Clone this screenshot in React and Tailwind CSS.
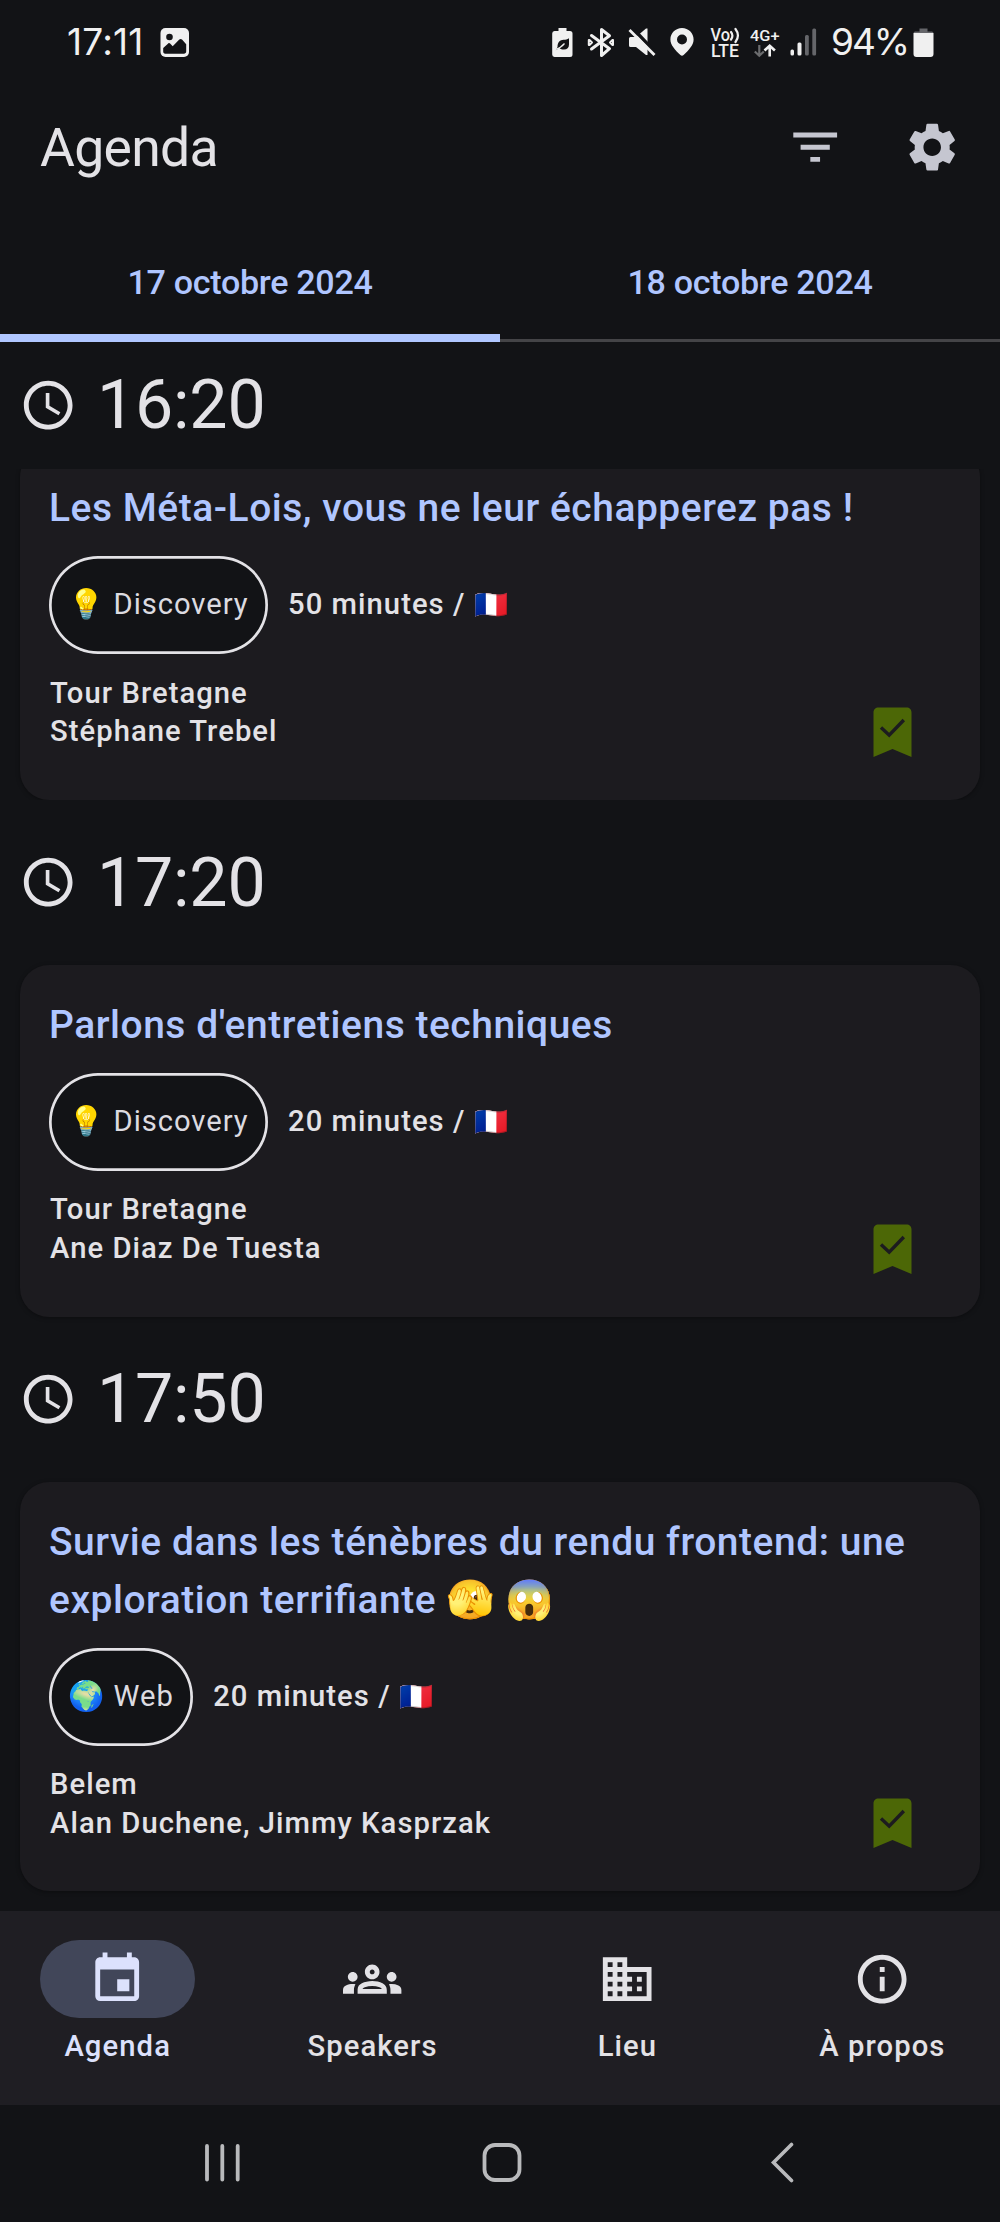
import React from 'react';
import {
  MdFilterList,
  MdSettings,
  MdSchedule,
  MdEvent,
  MdOutlineGroups,
  MdBusiness,
  MdOutlineInfo,
} from 'react-icons/md';

const slots = [
  {
    time: '16:20',
    title: 'Les Méta-Lois, vous ne leur échapperez pas !',
    emoji: '💡',
    category: 'Discovery',
    duration: '50 minutes /',
    language: '🇫🇷',
    room: 'Tour Bretagne',
    speakers: 'Stéphane Trebel',
  },
  {
    time: '17:20',
    title: "Parlons d'entretiens techniques",
    emoji: '💡',
    category: 'Discovery',
    duration: '20 minutes /',
    language: '🇫🇷',
    room: 'Tour Bretagne',
    speakers: 'Ane Diaz De Tuesta',
  },
  {
    time: '17:50',
    title: 'Survie dans les ténèbres du rendu frontend: une exploration terrifiante 🫣 😱',
    emoji: '🌍',
    category: 'Web',
    duration: '20 minutes /',
    language: '🇫🇷',
    room: 'Belem',
    speakers: 'Alan Duchene, Jimmy Kasprzak',
  },
];

const tabs = [
  { label: '17 octobre 2024', active: true },
  { label: '18 octobre 2024', active: false },
];

const destinations = [
  { label: 'Agenda', Icon: MdEvent, active: true },
  { label: 'Speakers', Icon: MdOutlineGroups, active: false },
  { label: 'Lieu', Icon: MdBusiness, active: false },
  { label: 'À propos', Icon: MdOutlineInfo, active: false },
];

function StatusBar() {
  return (
    <div className="flex h-[70px] shrink-0 items-start pt-[27px] pr-[66px] pl-[67px] text-[#f0f0f0]">
      <span className="font-['Inter',sans-serif] text-[37px] leading-[29px] tracking-[0.2px]">17:11</span>
      <svg className="ml-[16px]" width="30" height="31" viewBox="0 0 30 31" fill="none">
        <rect x="0.5" y="1" width="28.5" height="29" rx="5" fill="currentColor" />
        <circle cx="9.5" cy="10" r="3.3" fill="#121316" />
        <path d="M3.2 21l5-4.6c.7-.6 1.3-.5 1.9.1l2.6 2.8 6.6-6.7c.9-.9 1.9-.9 2.7 0l4.2 4.7v7.2c0 1.4-1 2.2-2.2 2.2H5.2c-1.2 0-2-.9-2-2.2z" fill="#121316" />
      </svg>

      <div className="ml-auto flex items-start">
        <svg width="21" height="31" viewBox="0 0 21 31">
          <path d="M6.5 1h8v3H18a2.5 2.5 0 0 1 2.5 2.5v21A2.5 2.5 0 0 1 18 30H2.5A2.5 2.5 0 0 1 .2 27.5v-21A2.5 2.5 0 0 1 2.5 4h4z" fill="currentColor" />
          <path d="M17 11.2v6.3c0 3.2-2 5-5 5-2 0-3.4-.5-4.6-1.5l-3.6 2.2 1.7-3.2c0-5 2.7-7 6-7.2 2.2-.1 3.6-.4 5.5-1.600z" fill="#121316" />
          <path d="M3.5 22.5C7 21.5 10 19.5 12.5 16.5" stroke="#f0f0f0" strokeWidth="1.2" fill="none" />
        </svg>
        <svg className="ml-[14px]" width="28" height="31" viewBox="0 0 28 31" fill="none" stroke="currentColor" strokeWidth="3" strokeLinejoin="round" strokeLinecap="round">
          <path d="M4.5 8.5l18 13.2L14.500 28.500V2.500l8 6.300-18 13.200" />
          <path d="M1.800 13v5M26 13v5M2.500 13l2.500 2.500L2.500 18M25.500 13L23 15.500l2.500 2.500" strokeWidth="2" />
        </svg>
        <svg className="ml-[13px]" width="28" height="31" viewBox="0 0 28 31" fill="none">
          <path d="M19.500 1.500v26.500h-1.500L8 20H2.500A1.500 1.500 0 0 1 1 18.500v-7A1.500 1.500 0 0 1 2.500 10H8L18 1.500z" fill="currentColor" />
          <path d="M4.500 1L28 26" stroke="#121316" strokeWidth="3.500" />
          <path d="M1.500 3L26.500 28" stroke="currentColor" strokeWidth="2.800" />
        </svg>
        <svg className="ml-[14px]" width="24" height="31" viewBox="0 0 24 31">
          <path fillRule="evenodd" d="M12 1C5.600 1 .4 6 .4 12.400c0 5.800 5 10.600 10 15.700.9 1 2.300 1 3.200 0 5-5.100 10-9.900 10-15.700C23.600 6 18.400 1 12 1zm0 6.500a5 5 0 1 1 0 10 5 5 0 0 1 0-10z" fill="currentColor" />
        </svg>
        <svg className="mt-[-5px] ml-[16px] font-['Roboto',sans-serif] font-medium" width="31" height="42" viewBox="0 -5 31 42" fill="currentColor">
          <text x="0.5" y="13.8" fontSize="17.5" textLength="19.5" lengthAdjust="spacingAndGlyphs">Vo</text>
          <text x="1" y="30" fontSize="17.5" textLength="28" lengthAdjust="spacingAndGlyphs">LTE</text>
          <path d="M21 5c1.800 2.300 1.800 5 0 7.500M25.500 2c3 4 3 9 0 13" fill="none" stroke="currentColor" strokeWidth="2.200" strokeLinecap="round" />
        </svg>
        <svg className="mt-[-5px] ml-[9px] font-['Roboto',sans-serif] font-medium" width="30" height="36" viewBox="0 -5 30 36" fill="none">
          <text x="0" y="14" fontSize="15.5" fill="currentColor" textLength="29.5" lengthAdjust="spacingAndGlyphs">4G+</text>
          <path d="M9.300 18v10.500M4.800 24.500l4.500 4.200 4.500-4.200" stroke="#6b6c6e" strokeWidth="2.200" />
          <path d="M19.700 29.500V19.500M14.500 23.500l5.200-4.800 5.200 4.800" stroke="currentColor" strokeWidth="2.600" />
        </svg>
        <svg className="ml-[10px]" width="27" height="31" viewBox="0 0 27 31" fill="currentColor">
          <rect x="0.5" y="22.5" width="3.5" height="6" rx="1.5" />
          <rect x="7.5" y="15.5" width="4" height="13" rx="1.5" />
          <rect x="15" y="8" width="3.8" height="20.5" rx="1.5" fill="#65666a" />
          <rect x="22.3" y="1.5" width="3.8" height="27" rx="1.5" fill="#65666a" />
        </svg>
        <span className="ml-[14px] w-[82px] font-['Inter',sans-serif] text-[37px] leading-[29px] tracking-[-2px] whitespace-nowrap">94%</span>
        <svg width="21" height="31" viewBox="0 0 21 31">
          <path d="M6.500 1.500h8v3h4c1 0 1.700.5 1.900 1.500H.600C.800 5 1.500 4.500 2.500 4.500h4z" fill="#65666a" />
          <path d="M.500 6h20v21a3 3 0 0 1-3 3h-14a3 3 0 0 1-3-3z" fill="currentColor" />
        </svg>
      </div>
    </div>
  );
}

function TimeHeader({ time }) {
  return (
    <div className="flex h-[126.5px] shrink-0 items-center gap-[19.5px] pl-[19px] text-[#e3e2e6]">
      <MdSchedule className="size-[58.4px]" />
      <span className="text-[68.1px] leading-none tracking-[-0.2px]">{time}</span>
    </div>
  );
}

function Bookmark() {
  return (
    <svg width="40" height="52" viewBox="0 0 40 52" fill="none">
      <path d="M0.500 50V5.500C.500 2.500 2.500.500 5.500.500h28c3 0 5 2 5 5V50L19.500 42z" fill="#4c6706" />
      <path d="M8 20.500l8.200 7.700L30.800 13" stroke="#1c1b1f" strokeWidth="3.400" />
    </svg>
  );
}

function SessionCard({ slot }) {
  return (
    <div className="mx-[20px] rounded-[29px] bg-[#1c1b1f] px-[29px] pt-[31px] pb-[48.5px] shadow-[0_1px_4px_rgba(0,0,0,0.35)]">
      <h2 className="text-[38.93px] leading-[58px] font-medium tracking-[0.55px] text-[#b0c6ff] [font-feature-settings:'liga'_1]">
        {slot.title}
      </h2>
      <div className="mt-[19px] flex items-center gap-[20px] text-[29.2px] tracking-[1.05px] text-[#e3e2e6]">
        <div className="flex h-[98px] items-center rounded-full bg-[#121316] pr-[19.5px] pl-[19.4px] tracking-[0.95px] text-[#dcdbe0] shadow-[inset_0_0_0_2.7px_#e3e2e6]">
          <span>{slot.emoji} {slot.category}</span>
        </div>
        <span className="font-medium">
          {slot.duration} <span className="text-[27.5px] tracking-normal">{slot.language}</span>
        </span>
      </div>
      <div className="mt-[19.5px] flex items-end justify-between pl-[1px] text-[29.2px] leading-[38.9px] font-medium tracking-[1.05px] text-[#e3e2e6]">
        <div>
          <p>{slot.room}</p>
          <p>{slot.speakers}</p>
        </div>
        <div className="mr-[38px] h-[44.5px]">
          <Bookmark />
        </div>
      </div>
    </div>
  );
}

export default function App() {
  const [pinned, ...rest] = slots;
  return (
    <div className="flex h-[2222px] w-[1000px] flex-col overflow-hidden bg-[#121316] font-['Roboto',sans-serif]">
      <StatusBar />

      <header className="flex h-[155px] shrink-0 items-center justify-between pr-[39px] pl-[40px]">
        <h1 className="text-[53.5px] leading-none tracking-[-0.7px] text-[#e3e2e6]">Agenda</h1>
        <div className="flex items-center gap-[58.4px] text-[#c5c6d0]">
          <MdFilterList className="size-[58.4px]" />
          <MdSettings className="size-[58.4px]" />
        </div>
      </header>

      <div className="flex h-[117px] shrink-0">
        {tabs.map((tab) => (
          <div key={tab.label} className="flex flex-1 flex-col justify-end text-[#b0c6ff]">
            <div className="flex flex-1 items-center justify-center pt-[7px] text-[34.07px] font-medium tracking-[-0.3px]">
              {tab.label}
            </div>
            <div className="flex h-[8px] items-end">
              <div className={tab.active ? 'h-[8px] w-full bg-[#b0c6ff]' : 'h-[3px] w-full bg-[#444447]'} />
            </div>
          </div>
        ))}
      </div>

      <main className="flex h-[1569px] shrink-0 flex-col overflow-hidden">
        <TimeHeader time={pinned.time} />
        <div className="shrink-0 overflow-hidden">
          <div className="mt-[-20.5px]">
            <SessionCard slot={pinned} />
          </div>
        </div>
        {rest.map((slot) => (
          <section key={slot.time} className="flex shrink-0 flex-col pt-[19.5px]">
            <TimeHeader time={slot.time} />
            <div className="pt-[19px]">
              <SessionCard slot={slot} />
            </div>
          </section>
        ))}
      </main>

      <nav className="flex h-[194px] shrink-0 gap-[19.5px] bg-[#1f1e23] pt-[28.5px]">
        {destinations.map(({ label, Icon, active }) => (
          <div
            key={label}
            className={
              active
                ? 'flex flex-1 flex-col items-center text-[#dce1fc]'
                : 'flex flex-1 flex-col items-center text-[#e3e2e6]'
            }
          >
            <div
              className={
                active
                  ? 'flex h-[78px] w-[155.5px] items-center justify-center rounded-full bg-[#414659] pt-[1px]'
                  : 'flex h-[78px] w-[155.5px] items-center justify-center pt-[1px]'
              }
            >
              <Icon className="size-[58.4px]" />
            </div>
            <span className="mt-[9px] text-[29.2px] leading-[39px] font-medium tracking-[1.1px]">{label}</span>
          </div>
        ))}
      </nav>

      <div className="flex h-[117px] shrink-0 items-center pb-[2px] pl-[204px] text-[#b9babc]">
        <svg width="37" height="40" viewBox="0 0 37 40" fill="none" stroke="currentColor" strokeWidth="3.8" strokeLinecap="round">
          <path d="M3 3v33.500M18.300 3v33.500M33.700 3v33.500" />
        </svg>
        <svg className="ml-[241px]" width="40" height="40" viewBox="0 0 40 40" fill="none" stroke="currentColor" strokeWidth="3.8">
          <rect x="2.5" y="2" width="35" height="35" rx="10.5" />
        </svg>
        <svg className="ml-[248px]" width="25" height="42" viewBox="0 0 25 42" fill="none" stroke="currentColor" strokeWidth="3.6" strokeLinecap="round">
          <path d="M21.500 2.500L3.500 20.500l18 18" />
        </svg>
      </div>
    </div>
  );
}
